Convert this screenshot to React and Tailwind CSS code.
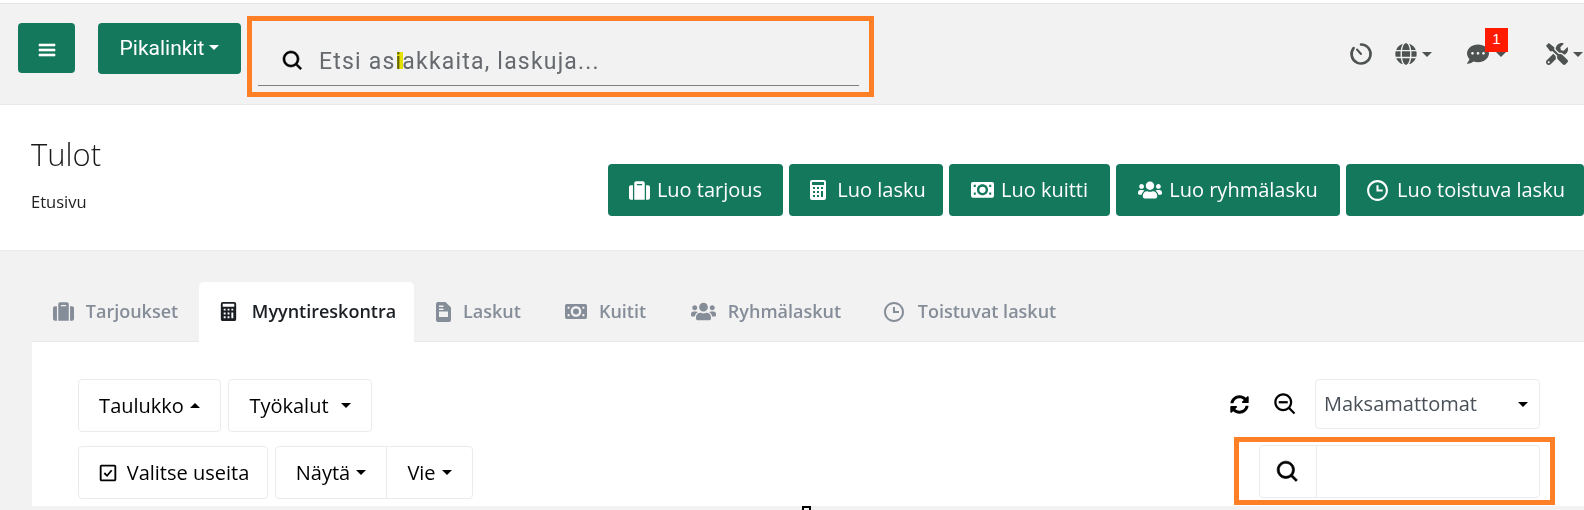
import { BiMenu, BiSearch, BiZoomOut, BiCheckSquare, BiTime, BiSolidCalculator } from 'react-icons/bi';
import { FaSuitcase, FaGlobe, FaCommentDots, FaTools, FaSyncAlt, FaUsers } from 'react-icons/fa';

const Caret = ({ up = false, className = '' }) => (
  <span
    className={`inline-block w-0 h-0 border-x-[5px] border-x-transparent ${up ? 'border-b-[5px] border-b-current' : 'border-t-[5px] border-t-current'} ${className}`}
  />
);

// no matching glyph in the icon packages for these three
const TimerIcon = ({ size = 24 }) => (
  <svg width={size} height={size} viewBox="0 0 24 24" fill="none" stroke="currentColor" strokeWidth="2.6" strokeLinecap="round">
    <path d="M12 2.5a9.5 9.5 0 1 1-7.4 3.6" />
    <path d="M8 7.5l4 4.5" strokeWidth="2" />
  </svg>
);

const CashIcon = ({ size = 20 }) => (
  <svg width={size} height={size * 0.68} viewBox="0 0 25 17" fill="currentColor">
    <path
      fillRule="evenodd"
      d="M2 0h21a2 2 0 0 1 2 2v13a2 2 0 0 1-2 2H2a2 2 0 0 1-2-2V2a2 2 0 0 1 2-2zM12.5 2.5C9 2.5 6.5 5 6.5 8.5s2.500 6 6 6 6-2.500 6-6-2.500-6-6-6zM3 3v2.500h2.200V3zM19.800 3v2.500H22V3zM3 11.500V14h2.200v-2.500zM19.800 11.500V14H22v-2.500z"
    />
    <circle cx="12.500" cy="8.500" r="3.400" />
  </svg>
);

const FileIcon = ({ size = 20 }) => (
  <svg width={size * 0.75} height={size} viewBox="0 0 15 20" fill="currentColor">
    <path
      fillRule="evenodd"
      d="M2 0h7.500L15 5.500V18a2 2 0 0 1-2 2H2a2 2 0 0 1-2-2V2a2 2 0 0 1 2-2zM3 3.500V5h4.500V3.500zM3 6.500V8h4.500V6.500zM3 9.500V15h9V9.500z"
    />
  </svg>
);

const actions = [
  { label: 'Luo tarjous', icon: <FaSuitcase size={21} />, width: 'w-[175px]' },
  { label: 'Luo lasku', icon: <BiSolidCalculator size={24} />, width: 'w-[154px]' },
  { label: 'Luo kuitti', icon: <CashIcon size={23} />, width: 'w-[161px]' },
  { label: 'Luo ryhmälasku', icon: <FaUsers size={24} />, width: 'w-[224px]' },
  { label: 'Luo toistuva lasku', icon: <BiTime size={25} />, width: 'w-[238px]' },
];

const tabs = [
  { label: 'Tarjoukset', icon: <FaSuitcase size={21} />, width: 'w-[167px]' },
  { label: 'Myyntireskontra', icon: <BiSolidCalculator size={23} />, width: 'w-[215px]', active: true },
  { label: 'Laskut', icon: <FileIcon size={20} />, width: 'w-[129px]' },
  { label: 'Kuitit', icon: <CashIcon size={22} />, width: 'w-[125px]' },
  { label: 'Ryhmälaskut', icon: <FaUsers size={25} />, width: 'w-[196px]' },
  { label: 'Toistuvat laskut', icon: <BiTime size={24} />, width: 'w-[210px]' },
];

const ToolButton = ({ children, className = '' }) => (
  <button className={`h-[53px] flex items-center justify-center bg-white border border-[#e9ebef] rounded-[4px] text-[20px] text-black ${className}`}>
    {children}
  </button>
);

export default function App() {
  return (
    <div className="w-[1584px] h-[510px] overflow-hidden bg-[#f2f2f2] flex flex-col font-['Open_Sans',sans-serif]">
      <div className="h-[4px] bg-white border-b border-[#e4e4e4]" />

      <header className="h-[101px] flex items-start border-b border-[#e9e9e9] pl-[18px] font-['Roboto',sans-serif]">
        <button className="mt-[19px] w-[57px] h-[50px] pt-[4px] flex items-center justify-center bg-[#14785c] rounded-[4px] text-white">
          <BiMenu size={24} className="[stroke-width:0.6]" />
        </button>
        <button className="mt-[19px] ml-[23px] w-[143px] h-[51px] flex items-center justify-center gap-[5px] bg-[#14785c] rounded-[4px] text-white text-[21px]">
          Pikalinkit
          <Caret className="-mt-[3px]" />
        </button>
        <div className="mt-[12px] ml-[6px] w-[627px] h-[81px] border-[5px] border-[#ff7f27] px-[6px] flex">
          <div className="relative mt-[16px] w-[601px] h-[49px] flex items-center border-b border-[#7f7f7f] pl-[23px]">
            <BiSearch size={24} className="text-black [stroke-width:0.6]" />
            <span className="ml-[14px] pt-[2px] text-[23px] tracking-[1.2px] text-[#66696d]">Etsi asiakkaita, laskuja...</span>
            <span className="absolute left-[139px] top-[15px] w-[6px] h-[17px] bg-[#f2ec00] mix-blend-multiply" />
          </div>
        </div>
        <div className="ml-auto flex items-center text-[#4e5352] mt-[38px]">
          <TimerIcon size={24} />
          <FaGlobe size={22} className="ml-[22px]" />
          <Caret className="ml-[5px]" />
          <span className="relative ml-[35px] flex items-center">
            <FaCommentDots size={22} className="block" />
            <Caret className="ml-[7px]" />
            <span className="absolute left-[18px] -top-[15px] w-[23px] h-[24px] bg-[#ff1a00] text-white text-[15px] font-['Liberation_Sans',sans-serif] leading-[22px] text-center">1</span>
          </span>
          <FaTools size={22} className="ml-[40px]" />
          <Caret className="ml-[5px] mr-[1px]" />
        </div>
      </header>

      <section className="h-[146px] shrink-0 bg-white border-b border-[#e9ebef] flex items-start pl-[31px]">
        <div className="w-[577px] shrink-0">
          <h1 className="mt-[27px] text-[31px] leading-[44px] font-light text-[#1a1a1a]">Tulot</h1>
          <p className="mt-[15px] text-[16.500px] leading-[22px] text-[#222]">Etusivu</p>
        </div>
        <div className="mt-[59px] flex gap-[6px]">
          {actions.map(({ label, icon, width }) => (
            <button key={label} className={`${width} h-[52px] shrink-0 flex items-center justify-center gap-[7px] bg-[#14785c] rounded-[4px] text-white text-[20px]`}>
              {icon}
              {label}
            </button>
          ))}
        </div>
      </section>

      <nav className="mt-[31px] pl-[32px] h-[60px] shrink-0 flex items-stretch">
        {tabs.map(({ label, icon, width, active }) => (
          <div
            key={label}
            className={`${width} shrink-0 flex items-center justify-center gap-[12px] text-[18px] font-semibold pb-[1px] ${active ? 'bg-white rounded-t-[5px] text-[#1b1f24] relative z-10' : 'text-[#858d98]'}`}
          >
            {icon}
            {label}
          </div>
        ))}
      </nav>

      <main className="ml-[32px] h-[165px] shrink-0 bg-white border-t border-[#e9e9e9] -mt-[1px] pl-[46px] pr-[44px] pt-[37px] flex justify-between">
        <div className="flex flex-col gap-[14px]">
          <div className="flex gap-[7px]">
            <ToolButton className="w-[143px] gap-[6px]">Taulukko <Caret up /></ToolButton>
            <ToolButton className="w-[144px] gap-[12px]">Työkalut <Caret /></ToolButton>
          </div>
          <div className="flex gap-[7px]">
            <ToolButton className="w-[190px] gap-[8px]"><BiCheckSquare size={22} />Valitse useita</ToolButton>
            <div className="flex h-[53px] border border-[#e9ebef] rounded-[4px] text-[20px]">
              <div className="w-[111px] flex items-center justify-center gap-[6px] border-r border-[#e9ebef]">Näytä <Caret /></div>
              <div className="w-[85px] flex items-center justify-center gap-[6px]">Vie <Caret /></div>
            </div>
          </div>
        </div>
        <div className="flex flex-col items-end">
          <div className="flex items-center">
            <FaSyncAlt size={19} className="text-black" />
            <BiZoomOut size={27} className="ml-[23px] text-black" />
            <div className="ml-[16px] w-[225px] h-[50px] flex items-center justify-between border border-[#e9ebef] rounded-[4px] pl-[8px] pr-[11px] text-[20px] text-[#495057]">
              Maksamattomat
              <Caret className="text-black" />
            </div>
          </div>
          <div className="mt-[8px] mr-[-15px] w-[321px] h-[68px] border-[5px] border-[#ff7f27] pt-[3px] pl-[20px]">
            <div className="w-[281px] h-[53px] flex border border-[#e9ebef] rounded-[4px]">
              <div className="w-[57px] flex items-center justify-center border-r border-[#e9ebef]">
                <BiSearch size={26} className="text-black [stroke-width:0.6]" />
              </div>
            </div>
          </div>
        </div>
      </main>

      <div className="relative flex-1">
        <span className="absolute left-[802px] top-0 w-[9px] h-[4px] border-2 border-b-0 border-black" />
      </div>
    </div>
  );
}
